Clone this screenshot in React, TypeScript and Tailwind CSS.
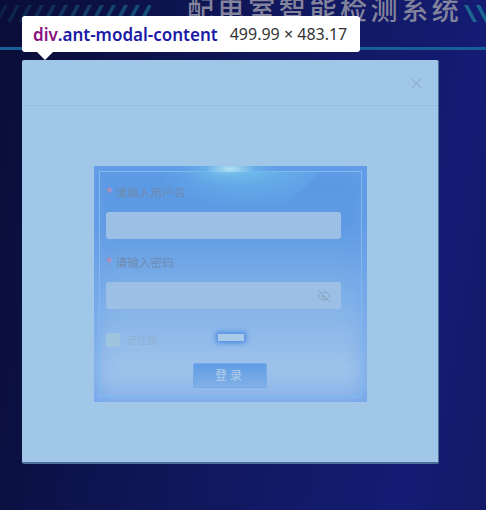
import { EyeOff, X } from "lucide-react";

function Stripes({ count, flip }: { count: number; flip?: boolean }) {
  return (
    <svg width={count * 12} height="17" viewBox={`0 0 ${count * 12} 17`} className="shrink-0">
      {Array.from({ length: count }).map((_, i) => (
        <polygon
          key={i}
          points={flip ? `${i * 12},0 ${i * 12 + 4},0 ${i * 12 + 13},17 ${i * 12 + 9},17` : `${i * 12 + 9},0 ${i * 12 + 13},0 ${i * 12 + 4},17 ${i * 12},17`}
          fill="#1d6f93"
          opacity={flip ? 0.9 : 0.2 + (i / count) * 0.5}
        />
      ))}
    </svg>
  );
}

function Label({ text }: { text: string }) {
  return (
    <div className="flex h-[14px] items-center gap-[3px] text-[11.7px] leading-none text-[#6f8cb2]">
      <span className="text-[#c98aa8]">*</span>
      <span>{text}</span>
    </div>
  );
}

export default function App() {
  return (
    <div
      className="relative h-[510px] w-[486px] overflow-hidden bg-[linear-gradient(100deg,#090d36_0%,#10175a_45%,#141c74_85%,#131a66_100%)]"
      style={{ fontFamily: '"Noto Sans", "Noto Sans CJK SC", sans-serif' }}
    >
      {/* header */}
      <div className="relative h-[60px]">
        <div className="flex h-[47px] items-start overflow-hidden">
          <div className="-ml-[5px] mt-[5px]">
            <Stripes count={13} />
          </div>
          <div className="ml-[36px] mt-[-8px] whitespace-nowrap text-[27px] font-medium leading-[36px] tracking-[3.6px] text-[#83849c]">
            配电室智能检测系统
          </div>
          <div className="ml-[2px] mt-[5px]">
            <Stripes count={3} flip />
          </div>
        </div>
        <div className="h-[3px] bg-[#175f96]" />
      </div>

      {/* modal */}
      <div className="ml-[22px] flex h-[404px] w-[417px] flex-col rounded-[2px] border-b-2 border-r border-[#4d6f98] bg-[#a0c6e8]">
        <div className="flex h-[46px] shrink-0 items-center justify-end border-b border-[#96bde0] pr-[13px] pt-[2px]">
          <X size={17} strokeWidth={1.3} className="text-[#7d9fbe]" />
        </div>
        <div className="flex flex-1 items-start justify-center pl-[1px] pt-[60px]">
          {/* login panel */}
          <div className="relative h-[236px] w-[273px] overflow-hidden bg-[linear-gradient(180deg,#5a99e4_0%,#5f9be3_25%,#7fb0e8_55%,#9dc2ea_85%,#94bbea_100%)] pl-[12px] pr-[26px] pt-[20px] shadow-[inset_0_0_22px_#6c9fec]">
            <div className="pointer-events-none absolute inset-[5px] border border-[#7dbcec]" />
            <div className="pointer-events-none absolute left-[86px] top-[-14px] h-[34px] w-[100px] rounded-full bg-[radial-gradient(closest-side,#b5e2f2,#6cb6e8aa_50%,transparent)]" />
            <svg className="pointer-events-none absolute left-[70px] top-[6px]" width="160" height="60" viewBox="0 0 160 60">
              <defs>
                <radialGradient id="sheen" cx="0.55" cy="0" r="0.6">
                  <stop offset="0" stopColor="#6bb8ea" stopOpacity="0.85" />
                  <stop offset="1" stopColor="#6bb8ea" stopOpacity="0" />
                </radialGradient>
              </defs>
              <polygon points="0,0 156,0 110,45 100,60 0,60" fill="url(#sheen)" />
            </svg>
            <div className="relative">
              <Label text="请输入用户名" />
              <div className="mt-[12px] h-[27px] rounded-[3px] bg-[#9cc0e5]" />
              <div className="mt-[17px]">
                <Label text="请输入密码" />
              </div>
              <div className="mt-[12px] flex h-[27px] items-center justify-end rounded-[3px] bg-[#9cc0e5] pr-[10px]">
                <EyeOff size={14} strokeWidth={1.2} className="text-[#7d95ae]" />
              </div>
              <div className="mt-[24px] flex h-[14px] items-center">
                <div className="h-[14px] w-[14px] rounded-[2px] bg-[#9dc4dc]" />
                <span className="ml-[7px] text-[10px] leading-none text-[#8eb0d0]">记住我</span>
              </div>
              <div className="ml-[87px] mt-[16px] flex">
                <div className="flex h-[25px] w-[74px] items-center justify-center rounded-[2px] border border-[#76a8ea] bg-[linear-gradient(180deg,#5f9de6,#82b0e6)] text-[12px] font-medium tracking-[3px] text-[#a9c8e8]">
                  登录
                </div>
              </div>
            </div>
            {/* highlighted element over the form */}
            <div className="absolute left-[124px] top-[168px] h-[7px] w-[26px] bg-[#a9cbe8] shadow-[0_0_5px_2px_#4d8ae6]" />
          </div>
        </div>
      </div>

      {/* devtools tooltip */}
      <div className="absolute left-[22px] top-[16px] flex h-[36px] w-[338px] items-center rounded-[3px] bg-white pl-[11px] text-[17px] leading-none">
        <span className="font-semibold text-[#881280]">div</span>
        <span className="font-semibold text-[#1a1aa6]">.ant-modal-content</span>
        <span className="ml-[12px] text-[16px] text-[#333333]">499.99 × 483.17</span>
        <div className="absolute left-[15px] top-[36px] h-0 w-0 border-l-[8px] border-r-[8px] border-t-[8px] border-l-transparent border-r-transparent border-t-white" />
      </div>
    </div>
  );
}
